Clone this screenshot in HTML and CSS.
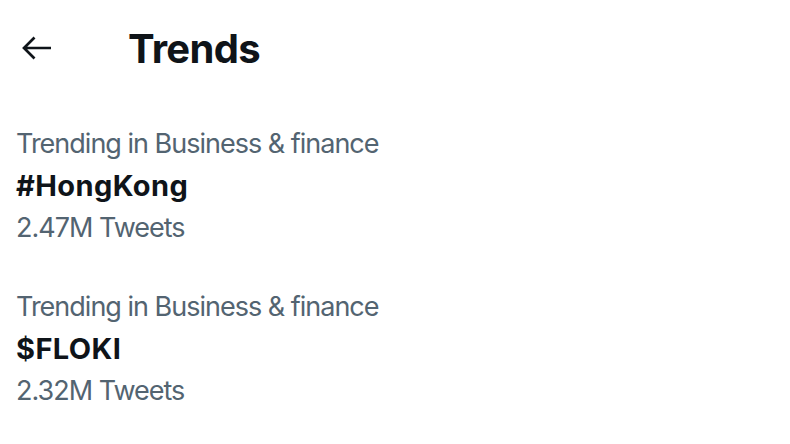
FILE: index.html
```html
<!DOCTYPE html>
<html lang="en">
<head>
    <meta charset="UTF-8">
    <meta name="viewport" content="width=device-width, initial-scale=1.0">
    <title>Trends</title>
    <link rel="stylesheet" href="styles.css">
</head>
<body>
    <!-- Cabecera con flecha de volver -->
    <header class="top-bar">
        <div class="back-btn">
            <svg viewBox="0 0 30 24" width="30" height="24">
                <path d="M29 12H2.5 M12.5 1.5L2 12l10.5 10.5"></path>
            </svg>
        </div>
        <h1 class="title">Trends</h1>
    </header>

    <!-- Lista de tendencias -->
    <div class="trend">
        <div class="trend-context">Trending in Business &amp; finance</div>
        <div class="trend-name">#HongKong</div>
        <div class="trend-count">2.47M Tweets</div>
    </div>

    <div class="trend">
        <div class="trend-context">Trending in Business &amp; finance</div>
        <div class="trend-name">$FLOKI</div>
        <div class="trend-count">2.32M Tweets</div>
    </div>
</body>
</html>
```

FILE: styles.css
```css
body {
    font-family: Inter, "Liberation Sans", sans-serif;
    margin: 0;
    padding: 0;
    background: #fff;
    color: #0f1419;
}
.top-bar {
    display: flex;
    align-items: center;
    height: 96px;
    padding: 0 22px;
}
.back-btn {
    display: flex;
    align-items: center;
}
.back-btn svg {
    fill: none;
    stroke: #0f1419;
    stroke-width: 2.7;
}
.title {
    margin: 0 0 0 76px;
    font-size: 40px;
    font-weight: 700;
    letter-spacing: -0.7px;
}
.trend {
    padding: 27px 16px 11px;
}
.trend-context,
.trend-count {
    color: #536471;
    font-size: 27px;
    letter-spacing: -1px;
    line-height: 41px;
}
.trend-name {
    font-size: 29px;
    font-weight: 700;
    letter-spacing: 0.4px;
    line-height: 43px;
}
```
